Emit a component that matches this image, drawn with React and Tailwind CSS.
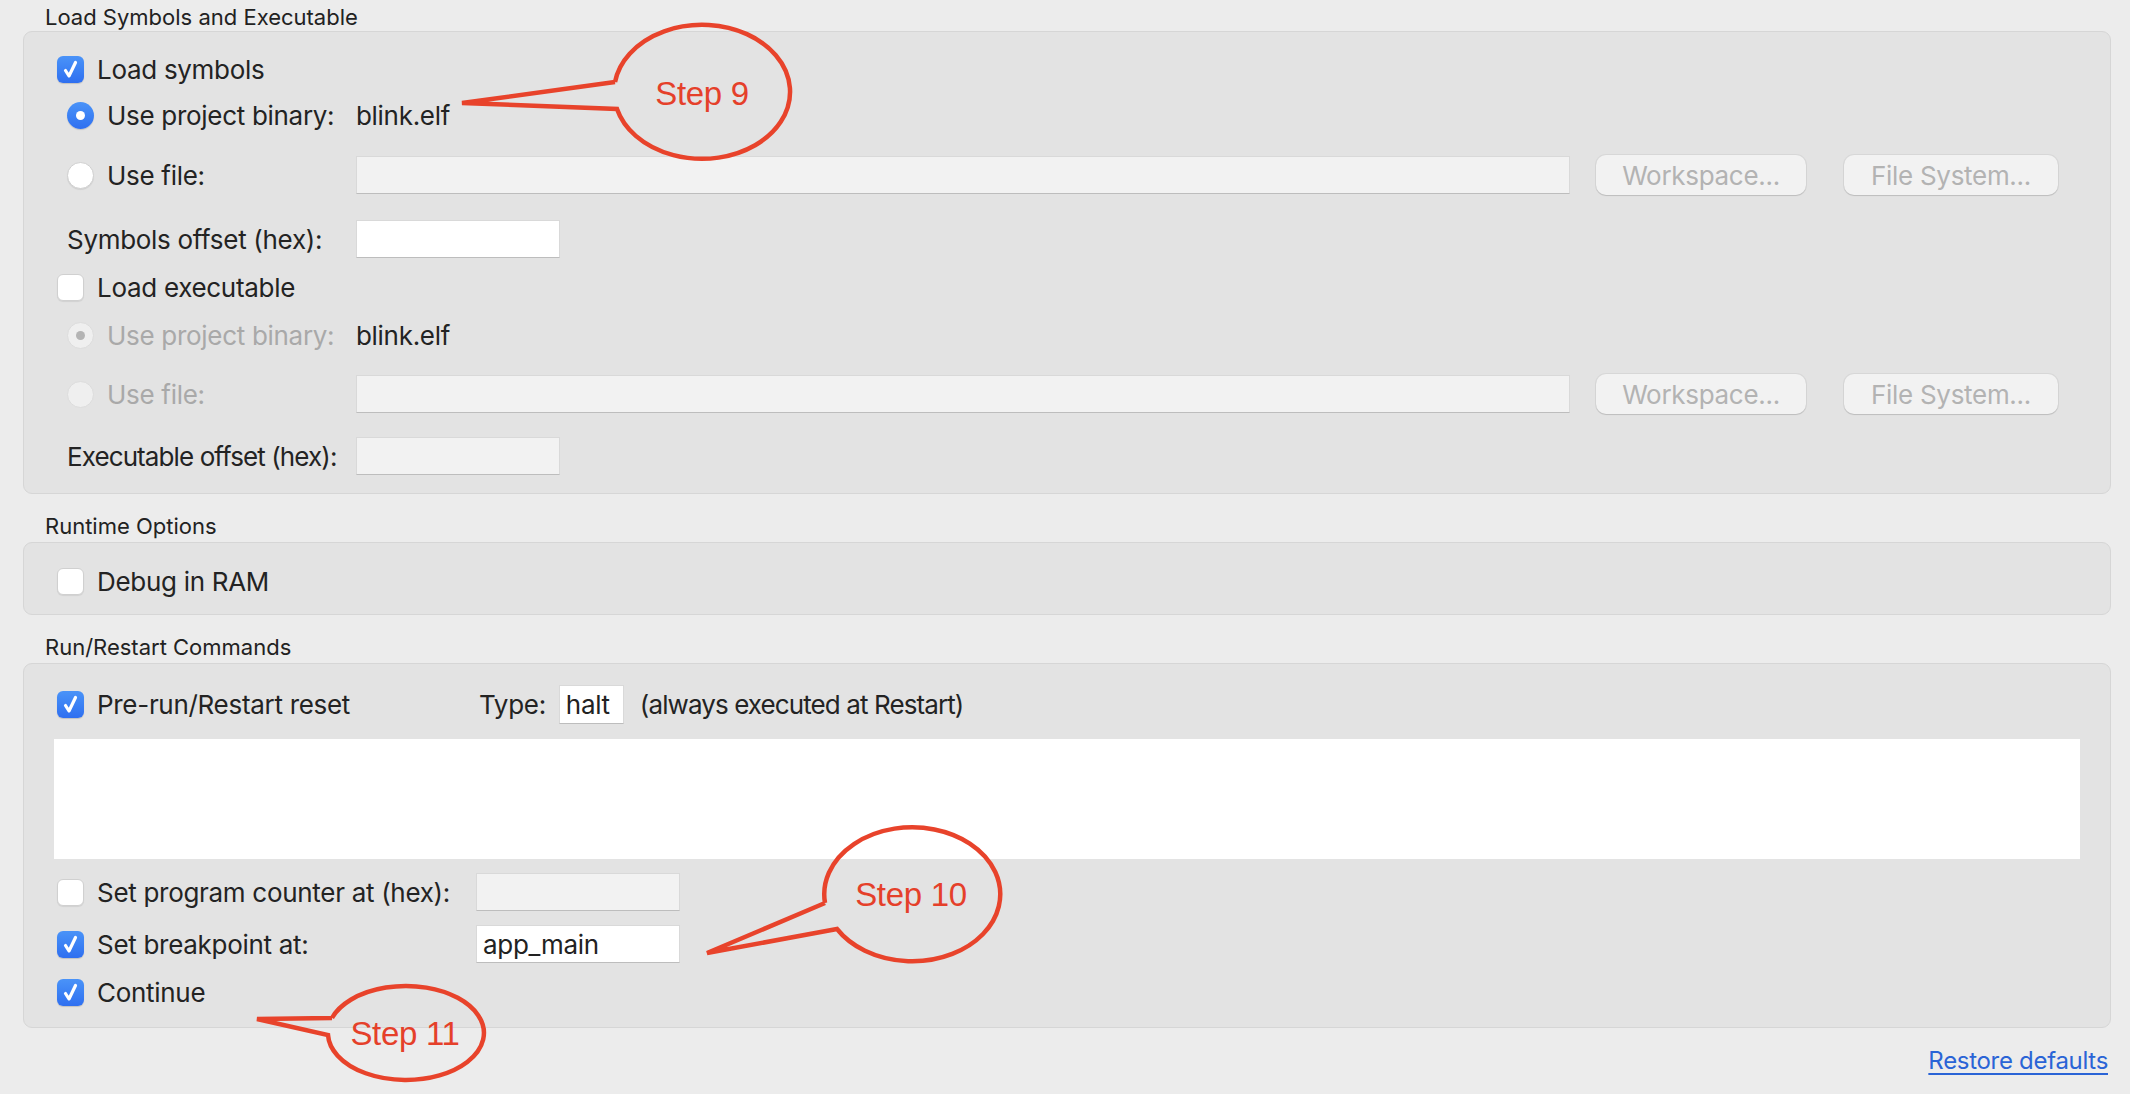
import React from 'react';

const Checkbox = ({ checked }) =>
  checked ? (
    <span className="flex h-[27px] w-[27px] shrink-0 items-center justify-center rounded-[6px] bg-gradient-to-b from-[#4a93f8] to-[#2f6ff0] shadow-[0_1px_1px_rgba(0,0,0,0.15)]">
      <svg width="27" height="27" viewBox="0 0 27 27">
        <path d="M8.5 14.5 L12 20 L18.5 6.5" fill="none" stroke="#fff" strokeWidth="3.2" strokeLinecap="round" strokeLinejoin="round" />
      </svg>
    </span>
  ) : (
    <span className="block h-[27px] w-[27px] shrink-0 rounded-[6px] border border-[#d0d0d0] bg-white shadow-[0_1px_1px_rgba(0,0,0,0.08)]" />
  );

const Radio = ({ checked, disabled }) => {
  if (disabled) {
    return (
      <span className="flex h-[27px] w-[27px] shrink-0 items-center justify-center rounded-full border border-[#dcdcdc] bg-[#efefef]">
        {checked && <span className="h-[9px] w-[9px] rounded-full bg-[#b4b4b4]" />}
      </span>
    );
  }
  return checked ? (
    <span className="flex h-[27px] w-[27px] shrink-0 items-center justify-center rounded-full bg-gradient-to-b from-[#4a93f8] to-[#2f6ff0] shadow-[0_1px_1px_rgba(0,0,0,0.15)]">
      <span className="h-[9px] w-[9px] rounded-full bg-white" />
    </span>
  ) : (
    <span className="block h-[27px] w-[27px] shrink-0 rounded-full border border-[#d0d0d0] bg-white shadow-[0_1px_1px_rgba(0,0,0,0.08)]" />
  );
};

const Field = ({ className = '', disabled, value }) => (
  <div
    className={`flex h-[38px] items-center border border-[#d9d9d9] border-b-[#bdbdbd] pl-[6px] text-[#222] ${
      disabled ? 'bg-[#f2f2f2]' : 'bg-white'
    } ${className}`}
  >
    {value}
  </div>
);

const Btn = ({ children, className = '' }) => (
  <div
    className={`flex h-[40px] items-center justify-center rounded-[10px] bg-[#f2f2f2] text-[#b3b3b3] shadow-[0_0_0_1px_rgba(0,0,0,0.05),0_1px_1px_rgba(0,0,0,0.12)] ${className}`}
  >
    {children}
  </div>
);

const Heading = ({ children, className = '' }) => (
  <div className={`pl-[45px] text-[22px] leading-[26px] tracking-normal text-[#222] ${className}`}>{children}</div>
);

const Panel = ({ children, className = '' }) => (
  <div className={`rounded-[9px] border border-[#d6d6d6] bg-[#e3e3e3] ${className}`}>{children}</div>
);

const Bubble = ({ cx, cy, d, label }) => (
  <g>
    <path d={d} fill="none" stroke="#e8432b" strokeWidth="4.5" strokeLinejoin="miter" />
    <text
      x={cx}
      y={cy}
      textAnchor="middle"
      dominantBaseline="central"
      fill="#e5402a"
      fontSize="33"
      fontFamily="'Liberation Sans', Arial, sans-serif"
    >
      {label}
    </text>
  </g>
);

export default function App() {
  return (
    <div className="relative min-h-[1094px] w-[2130px] overflow-hidden whitespace-nowrap bg-[#ececec] font-['Inter',sans-serif] text-[26px] tracking-[-0.3px] text-[#232323]">
      {/* Load Symbols and Executable */}
      <Heading className="h-[31px] pt-[4px]">Load Symbols and Executable</Heading>
      <div className="pl-[23px] pr-[19px]">
        <Panel className="pt-[17px] pb-[17px]">
          <div className="flex h-[40px] items-center pl-[33px]">
            <Checkbox checked />
            <span className="ml-[13px]">Load symbols</span>
          </div>
          <div className="mt-[6px] flex h-[40px] items-center pl-[43px]">
            <div className="flex w-[289px] items-center">
              <Radio checked />
              <span className="ml-[13px]">Use project binary:</span>
            </div>
            <span>blink.elf</span>
          </div>
          <div className="mt-[20px] flex h-[40px] items-center pl-[43px] pr-[52px]">
            <div className="flex w-[289px] items-center">
              <Radio />
              <span className="ml-[13px]">Use file:</span>
            </div>
            <Field className="flex-1" disabled />
            <Btn className="ml-[26px] w-[210px]">Workspace...</Btn>
            <Btn className="ml-[38px] w-[214px]">File System...</Btn>
          </div>
          <div className="mt-[24px] flex h-[40px] items-center pl-[43px]">
            <div className="w-[289px]">Symbols offset (hex):</div>
            <Field className="w-[204px]" />
          </div>
          <div className="mt-[8px] flex h-[40px] items-center pl-[33px]">
            <Checkbox />
            <span className="ml-[13px]">Load executable</span>
          </div>
          <div className="mt-[8px] flex h-[40px] items-center pl-[43px]">
            <div className="flex w-[289px] items-center">
              <Radio checked disabled />
              <span className="ml-[13px] text-[#a9a9a9]">Use project binary:</span>
            </div>
            <span>blink.elf</span>
          </div>
          <div className="mt-[19px] flex h-[40px] items-center pl-[43px] pr-[52px]">
            <div className="flex w-[289px] items-center">
              <Radio disabled />
              <span className="ml-[13px] text-[#a9a9a9]">Use file:</span>
            </div>
            <Field className="flex-1" disabled />
            <Btn className="ml-[26px] w-[210px]">Workspace...</Btn>
            <Btn className="ml-[38px] w-[214px]">File System...</Btn>
          </div>
          <div className="mt-[22px] flex h-[40px] items-center pl-[43px]">
            <div className="w-[289px] tracking-[-0.9px]">Executable offset (hex):</div>
            <Field className="w-[204px]" disabled />
          </div>
        </Panel>
      </div>

      {/* Runtime Options */}
      <Heading className="h-[48px] pt-[19px]">Runtime Options</Heading>
      <div className="pl-[23px] pr-[19px]">
        <Panel className="pt-[18px] pb-[13px]">
          <div className="flex h-[40px] items-center pl-[33px]">
            <Checkbox />
            <span className="ml-[13px]">Debug in RAM</span>
          </div>
        </Panel>
      </div>

      {/* Run/Restart Commands */}
      <Heading className="h-[48px] pt-[19px]">Run/Restart Commands</Heading>
      <div className="pl-[23px] pr-[19px]">
        <Panel className="pt-[20px] pb-[15px]">
          <div className="flex h-[40px] items-center pl-[33px]">
            <div className="flex w-[419px] items-center">
              <Checkbox checked />
              <span className="ml-[13px]">Pre-run/Restart reset</span>
            </div>
            <span className="ml-[3px]">Type:</span>
            <Field className="ml-[13px] h-[39px] w-[65px]" value="halt" />
            <span className="ml-[16px] tracking-[-0.9px]">(always executed at Restart)</span>
          </div>
          <div className="mx-[30px] mt-[15px] h-[120px] bg-white" />
          <div className="mt-[13px] flex h-[40px] items-center pl-[33px]">
            <div className="flex w-[419px] items-center">
              <Checkbox />
              <span className="ml-[13px]">Set program counter at (hex):</span>
            </div>
            <Field className="w-[204px]" disabled />
          </div>
          <div className="mt-[12px] flex h-[40px] items-center pl-[33px]">
            <div className="flex w-[419px] items-center">
              <Checkbox checked />
              <span className="ml-[13px]">Set breakpoint at:</span>
            </div>
            <Field className="w-[204px]" value="app_main" />
          </div>
          <div className="mt-[8px] flex h-[40px] items-center pl-[33px]">
            <Checkbox checked />
            <span className="ml-[13px]">Continue</span>
          </div>
        </Panel>
      </div>

      <div className="mt-[17px] flex justify-end pr-[22px]">
        <span className="text-[24px] leading-[32px] text-[#2a64d6] underline underline-offset-[4px]">Restore defaults</span>
      </div>

      {/* callouts */}
      <svg className="pointer-events-none absolute left-0 top-0" width="2130" height="1094">
        <Bubble cx={702} cy={93} label="Step 9" d="M 615 82 L 462 103 L 617 109 A 88 67 0 1 0 615 82" />
        <Bubble cx={911} cy={894} label="Step 10" d="M 825 903 L 707 953 L 837 929 A 88 67 0 1 0 825 903" />
        <Bubble cx={405} cy={1033} label="Step 11" d="M 332 1018 L 257 1019 L 328 1035 A 78 47 0 1 0 332 1018" />
      </svg>
    </div>
  );
}
